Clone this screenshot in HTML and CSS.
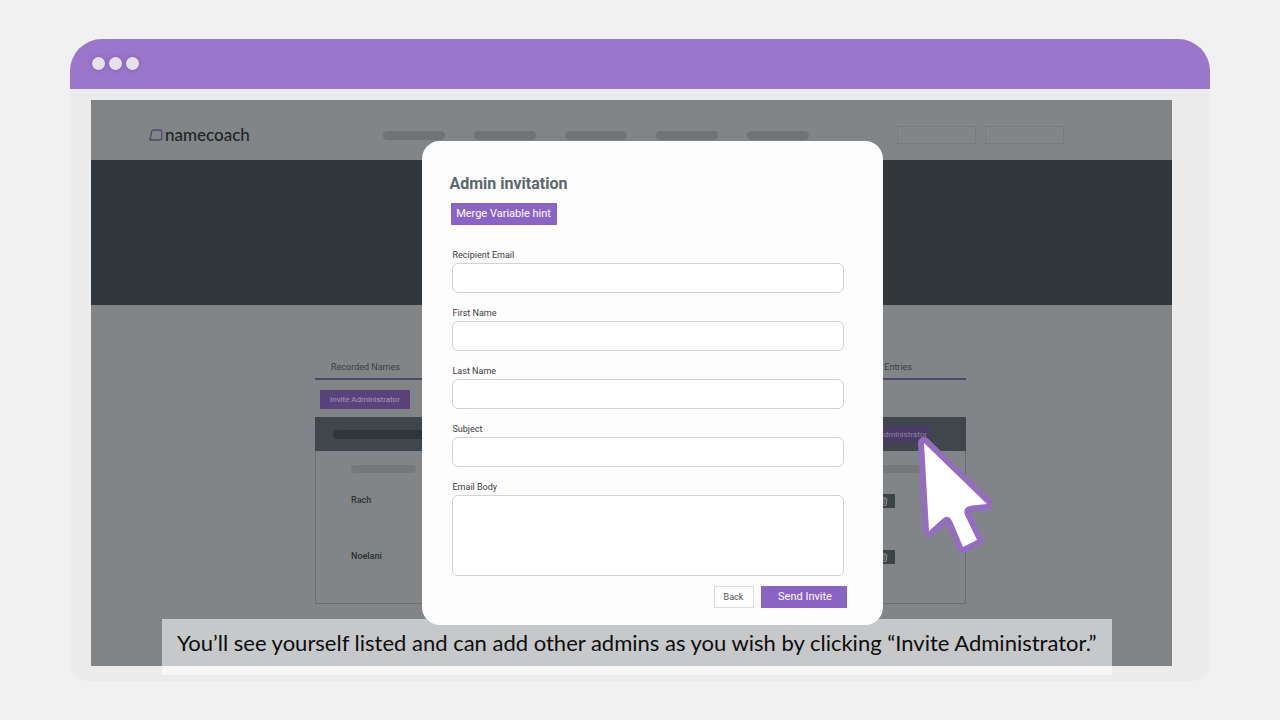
FILE: index.html
```html
<!DOCTYPE html>
<html lang="en">
<head>
    <meta charset="UTF-8">
    <meta name="viewport" content="width=device-width, initial-scale=1.0">
    <title>Admin invitation</title>
    <link rel="stylesheet" href="styles.css">
</head>
<body>
    <div class="window">
        <div class="titlebar">
            <span class="dot"></span>
            <span class="dot"></span>
            <span class="dot"></span>
        </div>

        <div class="screen">
            <header class="navbar">
                <a href="#" class="logo">
                    <svg width="14" height="12" viewBox="0 0 14 12"><path d="M4.6 1h6.200q2 0 2 2v6q0 2-2 2H1.200q-.8 0-.4-.9.9-1.300 1-2.900L2.500 3q.4-2 2.100-2z" fill="none" stroke="#54456b" stroke-width="1.300"/></svg>
                    <span>namecoach</span>
                </a>
                <nav class="links">
                    <span class="skeleton"></span>
                    <span class="skeleton"></span>
                    <span class="skeleton"></span>
                    <span class="skeleton"></span>
                    <span class="skeleton"></span>
                </nav>
                <div class="boxes">
                    <span class="box"></span>
                    <span class="box"></span>
                </div>
            </header>

            <div class="hero"></div>

            <main class="content">
                <div class="panel">
                    <div class="tabs">
                        <a href="#">Recorded Names</a>
                        <a href="#">Entries</a>
                    </div>
                    <button type="button" class="btn-dim">Invite Administrator</button>
                    <div class="list">
                        <div class="list-head">
                            <span class="search"></span>
                            <button type="button" class="btn-dim btn-head">Invite Administrator</button>
                        </div>
                        <table>
                            <tr class="row-skeleton">
                                <td><span class="skeleton"></span></td>
                                <td><span class="skeleton"></span></td>
                            </tr>
                            <tr class="row-name">
                                <td>Rach</td>
                                <td>
                                    <button type="button" class="trash" aria-label="Delete Rach">
                                        <svg width="8" height="9" viewBox="0 0 8 9"><path d="M.5 2h7M2.700 2V.7h2.600V2M1.300 2l.4 6.300h4.600L6.700 2M3.200 3.500v3.300M4.800 3.500v3.300" fill="none" stroke="#858a8c"/></svg>
                                    </button>
                                </td>
                            </tr>
                            <tr class="row-name">
                                <td>Noelani</td>
                                <td>
                                    <button type="button" class="trash" aria-label="Delete Noelani">
                                        <svg width="8" height="9" viewBox="0 0 8 9"><path d="M.5 2h7M2.700 2V.7h2.600V2M1.300 2l.4 6.300h4.600L6.700 2M3.200 3.500v3.300M4.800 3.500v3.300" fill="none" stroke="#858a8c"/></svg>
                                    </button>
                                </td>
                            </tr>
                        </table>
                    </div>
                    <svg class="cursor" width="84" height="124" viewBox="0 0 84 124">
                        <path d="M12 11 75 72 60 73.500Q50 75 53 83L65 108 51 115 40 89Q36 82 31 86.500L17 99Z" fill="#fff" stroke="#946dc0" stroke-width="12" stroke-linejoin="round" paint-order="stroke"/>
                    </svg>
                </div>
            </main>

            <div class="overlay">
                <form class="modal">
                    <h1>Admin invitation</h1>
                    <button type="button" class="btn btn-hint">Merge Variable hint</button>
                    <div class="fields">
                        <div class="field">
                            <label for="email">Recipient Email</label>
                            <input type="email" id="email" name="email">
                        </div>
                        <div class="field">
                            <label for="firstName">First Name</label>
                            <input type="text" id="firstName" name="firstName">
                        </div>
                        <div class="field">
                            <label for="lastName">Last Name</label>
                            <input type="text" id="lastName" name="lastName">
                        </div>
                        <div class="field">
                            <label for="subject">Subject</label>
                            <input type="text" id="subject" name="subject">
                        </div>
                        <div class="field">
                            <label for="body">Email Body</label>
                            <textarea id="body" name="body"></textarea>
                        </div>
                    </div>
                    <div class="actions">
                        <button type="button" class="btn btn-back">Back</button>
                        <button type="button" class="btn btn-send">Send Invite</button>
                    </div>
                </form>
            </div>
        </div>

        <p class="caption">You’ll see yourself listed and can add other admins as you wish by clicking “Invite Administrator.”</p>
    </div>
</body>
</html>
```
FILE: styles.css
```css
* {
    box-sizing: border-box;
}
body {
    margin: 0;
    padding: 39px 70px;
    background-color: #f1f1f1;
    font-family: Roboto, sans-serif;
}
button {
    font-family: inherit;
    cursor: pointer;
}
.window {
    position: relative;
    padding-bottom: 15px;
    border-radius: 32px 32px 16px 16px;
    background-color: #ececec;
}
.titlebar {
    display: flex;
    gap: 4px;
    height: 50px;
    padding: 18px 22px;
    border-radius: 32px 32px 0 0;
    background-color: #9b77cc;
}
.dot {
    width: 13px;
    height: 13px;
    border-radius: 50%;
    background-color: #e7e2ea;
    box-shadow: 0 0 5px rgba(80, 50, 120, 0.4);
}
.screen {
    position: relative;
    margin: 11px 38px 0 21px;
    background-color: #828587;
}

/* dimmed page */
.navbar {
    display: flex;
    align-items: center;
    height: 60px;
    padding: 10px 108px 0 58px;
}
.logo {
    display: flex;
    align-items: center;
    gap: 2px;
    width: 234px;
    color: #202427;
    font-family: Lato, sans-serif;
    font-size: 17px;
    font-weight: 500;
    line-height: 20px;
    text-decoration: none;
}
.links {
    display: flex;
    flex: 1;
    gap: 29px;
}
.skeleton {
    display: block;
    width: 62px;
    height: 9px;
    border-radius: 5px;
    background-color: #6f7375;
}
.boxes {
    display: flex;
    gap: 9px;
}
.box {
    width: 79px;
    height: 18px;
    border: 1px solid #777b7c;
}
.hero {
    height: 145px;
    background-color: #31373b;
}
.content {
    padding: 54px 0 62px 18px;
}
.panel {
    position: relative;
    width: 651px;
    margin: 0 auto;
}
.tabs {
    display: flex;
    justify-content: space-between;
    margin-bottom: 10px;
    padding: 0 54px 3px 16px;
    border-bottom: 2px solid #51466b;
}
.tabs a {
    color: #3a3e41;
    font-size: 9px;
    line-height: 16px;
    text-decoration: none;
}
.btn-dim {
    display: block;
    width: 90px;
    height: 19px;
    margin-left: 5px;
    padding: 0;
    border: none;
    background-color: #5a437b;
    color: #a69db1;
    font-size: 8px;
    line-height: 18px;
}
.list {
    height: 187px;
    margin-top: 8px;
    border: 1px solid #6a6e70;
}
.list-head {
    display: flex;
    align-items: center;
    justify-content: space-between;
    height: 34px;
    margin: -1px -1px 0;
    padding: 0 36px 0 18px;
    background-color: #40464b;
}
.search {
    width: 160px;
    height: 9px;
    border-radius: 5px;
    background-color: #2f353b;
}
.btn-head {
    height: 17px;
    padding-right: 3px;
    background-color: #4a3b66;
    color: #8d849c;
    line-height: 17px;
    text-align: right;
}
table {
    width: 100%;
    border-collapse: collapse;
}
td {
    padding: 0;
}
td:first-child {
    padding-left: 35px;
}
.row-skeleton {
    height: 22px;
    vertical-align: bottom;
}
.row-skeleton .skeleton {
    width: 65px;
    height: 8px;
    background-color: #747878;
}
.row-name {
    height: 56px;
    color: #2b2f31;
    font-size: 9px;
    font-weight: 500;
}
.row-name td:first-child {
    padding-bottom: 3px;
}
td:last-child {
    width: 106px;
}
.trash {
    display: flex;
    align-items: center;
    justify-content: center;
    width: 22px;
    height: 14px;
    margin-left: 14px;
    padding: 0;
    border: none;
    background-color: #3d4448;
}
.cursor {
    position: absolute;
    top: 73px;
    right: -30px;
}

/* modal */
.overlay {
    position: absolute;
    z-index: 2;
    top: 41px;
    right: 0;
    left: 41px;
    display: flex;
    justify-content: center;
}
.modal {
    width: 461px;
    padding: 32px 36px 17px 28px;
    border-radius: 18px;
    background-color: #fdfdfd;
}
h1 {
    margin: 0 0 8px;
    color: #5b676c;
    font-size: 16px;
    font-weight: 700;
    line-height: 22px;
}
.btn {
    height: 22px;
    padding: 0;
    border: none;
    background-color: #8a63c5;
    color: #fff;
    font-size: 11px;
    font-weight: 400;
    line-height: 22px;
}
.btn-hint {
    display: block;
    width: 106px;
    margin-left: 1px;
}
.fields {
    display: flex;
    flex-direction: column;
    gap: 12px;
    margin: 22px 3px 10px 2px;
}
.field label {
    display: block;
    padding-left: 1px;
    color: #3c3c3c;
    font-size: 9px;
    line-height: 16px;
}
.field input,
.field textarea {
    display: block;
    width: 100%;
    height: 30px;
    padding: 4px 8px;
    border: 1px solid #d2d2d4;
    border-radius: 6px;
    background-color: #fff;
    font-family: inherit;
    font-size: 11px;
    resize: none;
}
.field textarea {
    height: 81px;
}
.actions {
    display: flex;
    justify-content: flex-end;
    gap: 7px;
}
.btn-back {
    width: 40px;
    border: 1px solid #dcdcdf;
    background-color: #fff;
    color: #505052;
    font-size: 9px;
    line-height: 20px;
}
.btn-send {
    width: 86px;
    padding-left: 3px;
}

.caption {
    position: absolute;
    z-index: 1;
    right: 98px;
    bottom: 6px;
    left: 92px;
    margin: 0;
    padding: 8px 0 16px 15px;
    background-color: rgba(255, 255, 255, 0.55);
    color: #0c0d0d;
    font-family: Lato, sans-serif;
    font-size: 22px;
    line-height: 32px;
}
```
